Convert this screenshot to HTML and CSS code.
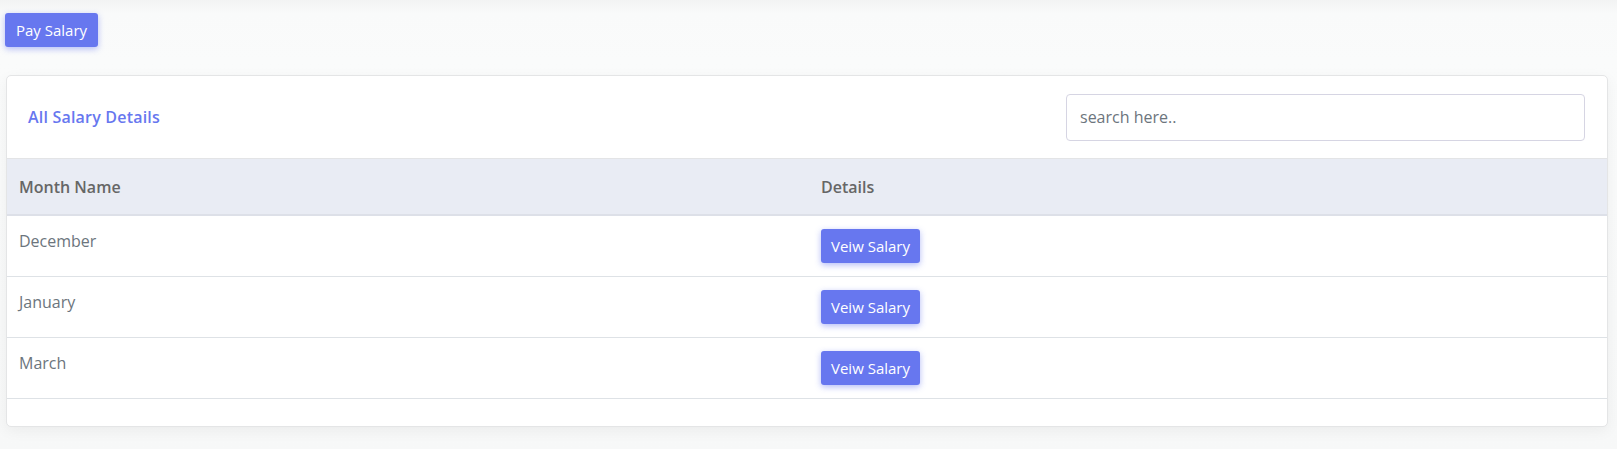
FILE: index.html
```html
<!DOCTYPE html>
<html lang="en">
<head>
<meta charset="utf-8">
<title>Salary</title>
<link rel="stylesheet" href="styles.css">
</head>
<body>
<div class="page">
  <div class="toolbar">
    <button class="btn btn-primary btn-top">Pay Salary</button>
  </div>
  <div class="card">
    <div class="card-header">
      <h4 class="card-title">All Salary Details</h4>
      <input class="search" type="text" placeholder="search here..">
    </div>
    <div class="card-body">
      <table class="table">
        <thead>
          <tr><th>Month Name</th><th>Details</th></tr>
        </thead>
        <tbody>
          <tr><td>December</td><td><button class="btn btn-primary">Veiw Salary</button></td></tr>
          <tr><td>January</td><td><button class="btn btn-primary">Veiw Salary</button></td></tr>
          <tr><td>March</td><td><button class="btn btn-primary">Veiw Salary</button></td></tr>
        </tbody>
      </table>
    </div>
  </div>
</div>
</body>
</html>
```
FILE: styles.css
```css
* { box-sizing: border-box; }
html, body { height: 100%; }
body {
  margin: 0;
  font-family: "Open Sans", "Lato", "Liberation Sans", sans-serif;
  color: #6c757d;
  background: linear-gradient(to bottom, #f2f3f3 0px, #f9fafa 14px, #fafbfb 60px, #f7f8f8 100%);
}
.page {
  padding: 13px 9px 20px 5px;
}
.toolbar {
  display: flex;
  margin-bottom: 28px;
}
.btn {
  font-family: inherit;
  border: none;
  border-radius: 3px;
  cursor: pointer;
  color: #fff;
  font-size: 15px;
  line-height: 20px;
  padding: 7px 10px;
  height: 34px;
}
.btn-primary {
  background: #6777ef;
  box-shadow: 0 2px 6px rgba(172, 181, 246, 0.9);
}
.btn-top {
  width: 93px;
  padding: 7px 0;
}
.card {
  margin-left: 1px;
  background: #fff;
  border: 1px solid #e4e5e6;
  border-radius: 5px;
  box-shadow: 0 4px 14px rgba(0, 0, 0, 0.05);
}
.card-header {
  display: flex;
  align-items: center;
  justify-content: space-between;
  height: 83px;
  padding: 0 22px 0 21px;
  border-bottom: 1px solid #e3e4e6;
}
.card-title {
  margin: 0;
  font-size: 16px;
  font-weight: 600;
  letter-spacing: 0.2px;
  color: #6777ef;
}
.search {
  width: 519px;
  height: 47px;
  border: 1px solid #d6d5e3;
  border-radius: 4px;
  padding: 0 13px;
  font-family: inherit;
  font-size: 16px;
  color: #495057;
  outline: none;
}
.search::placeholder { color: #6c757d; }
.card-body {
  padding-bottom: 27px;
}
.table {
  width: 100%;
  border-collapse: collapse;
  table-layout: fixed;
}
.table th {
  text-align: left;
  background: #e9ecf4;
  color: #666;
  font-weight: 600;
  font-size: 16px;
  height: 56px;
  padding: 0 12px;
  border-bottom: 2px solid #dde0e8;
}
.table th + th,
.table td + td {
  padding-left: 14px;
}
.table td {
  vertical-align: top;
  padding: 13px 12px 13px;
  font-size: 16px;
  line-height: 24px;
  border-bottom: 1px solid #dee2e6;
}
```
